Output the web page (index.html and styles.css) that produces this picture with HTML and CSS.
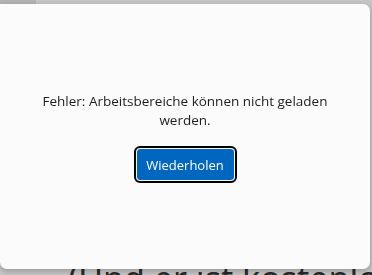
FILE: index.html
```html
<!DOCTYPE html>
<html lang="de">
<head>
    <meta charset="UTF-8">
    <meta name="viewport" content="width=device-width, initial-scale=1.0">
    <title>Arbeitsbereiche</title>
    <link rel="stylesheet" href="styles.css">
</head>
<body>
    <!-- Seite hinter dem Dialog -->
    <div class="page">
        <div class="topbar">
            <span class="tab"></span>
        </div>
        <h1 class="headline">(Und er ist kostenlos)</h1>
    </div>

    <!-- Fehlerdialog -->
    <div class="dialog">
        <p class="msg">Fehler: Arbeitsbereiche können nicht geladen werden.</p>
        <button class="retry">Wiederholen</button>
    </div>
</body>
</html>
```

FILE: styles.css
```css
*{
    margin: 0;
    padding: 0;
    box-sizing: border-box;
}

body{
    background: #c6c6c6;
    font-family: "Open Sans", "Noto Sans", sans-serif;
    overflow: hidden;
    height: 275px;
}

.topbar{
    height: 4px;
    display: flex;
}

.topbar .tab{
    width: 36px;
    background: #b4b4b4;
}

.headline{
    margin-top: 251px;
    padding-left: 68px;
    font: 34px "Noto Sans", sans-serif;
    color: #2a2a2a;
    white-space: nowrap;
}

.dialog{
    position: fixed;
    top: 4px;
    left: 0;
    width: 370px;
    height: 265px;
    background: #fbfbfb;
    border-radius: 0 7px 7px 7px;
    box-shadow: 0 2px 6px rgba(0,0,0,0.25);
    display: flex;
    flex-direction: column;
    align-items: center;
    justify-content: center;
    padding: 0 36px;
    gap: 18px;
}

.msg{
    font-size: 13.5px;
    line-height: 19px;
    color: #1e1e1e;
    text-align: center;
}

.retry{
    width: 99px;
    height: 33px;
    background: #0067c0;
    color: #fff;
    font: 13px "Open Sans", "Noto Sans", sans-serif;
    border: 1px solid #fff;
    border-radius: 4px;
    outline: 2px solid #000;
    cursor: pointer;
}
```
